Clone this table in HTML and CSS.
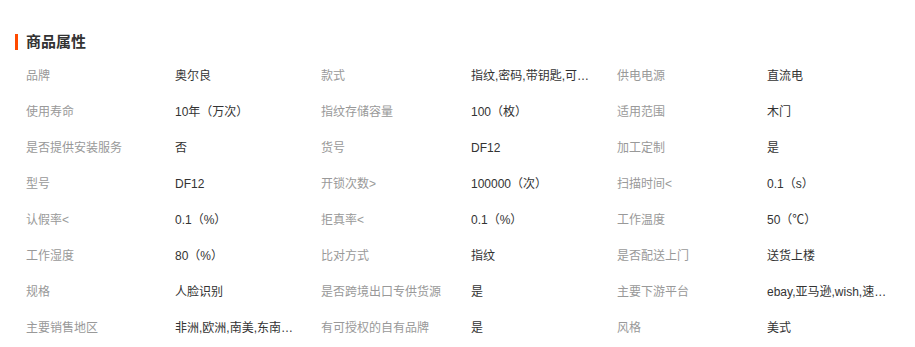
FILE: index.html
```html
<!DOCTYPE html>
<html lang="zh-CN">
<head>
<meta charset="utf-8">
<title>商品属性</title>
<link rel="stylesheet" href="styles.css">
</head>
<body>
<section class="attrs">
  <h2 class="attrs-title">商品属性</h2>
  <dl class="attrs-grid">
    <dt>品牌</dt><dd>奥尔良</dd>
    <dt>款式</dt><dd><span class="clip">指纹,密码,带钥匙,可远程开锁</span></dd>
    <dt>供电电源</dt><dd>直流电</dd>

    <dt>使用寿命</dt><dd>10年（万次）</dd>
    <dt>指纹存储容量</dt><dd>100（枚）</dd>
    <dt>适用范围</dt><dd>木门</dd>

    <dt>是否提供安装服务</dt><dd>否</dd>
    <dt>货号</dt><dd>DF12</dd>
    <dt>加工定制</dt><dd>是</dd>

    <dt>型号</dt><dd>DF12</dd>
    <dt>开锁次数&gt;</dt><dd>100000（次）</dd>
    <dt>扫描时间&lt;</dt><dd>0.1（s）</dd>

    <dt>认假率&lt;</dt><dd>0.1（%）</dd>
    <dt>拒真率&lt;</dt><dd>0.1（%）</dd>
    <dt>工作温度</dt><dd>50（℃）</dd>

    <dt>工作湿度</dt><dd>80（%）</dd>
    <dt>比对方式</dt><dd>指纹</dd>
    <dt>是否配送上门</dt><dd>送货上楼</dd>

    <dt>规格</dt><dd>人脸识别</dd>
    <dt>是否跨境出口专供货源</dt><dd>是</dd>
    <dt>主要下游平台</dt><dd><span class="clip">ebay,亚马逊,wish,速卖通,独立站</span></dd>

    <dt>主要销售地区</dt><dd><span class="clip">非洲,欧洲,南美,东南亚,北美</span></dd>
    <dt>有可授权的自有品牌</dt><dd>是</dd>
    <dt>风格</dt><dd>美式</dd>
  </dl>
</section>
</body>
</html>
```
FILE: styles.css
```css
html, body {
  margin: 0;
  padding: 0;
  background: #fff;
}

body {
  font-family: "Liberation Sans", "Noto Sans CJK SC", sans-serif;
  color: #333;
}

.attrs {
  padding: 34px 0 0 15px;
}

.attrs-title {
  margin: 0;
  font-size: 15px;
  line-height: 16px;
  font-weight: bold;
  color: #333;
  border-left: 3px solid #ff4a00;
  padding-left: 8px;
  height: 16px;
}

.attrs-grid {
  margin: 8px 0 0 11px;
  display: grid;
  grid-template-columns: 149px 146px 150px 146px 150px 146px;
  grid-auto-rows: 36px;
  font-size: 12px;
  line-height: 36px;
}

.attrs-grid dt,
.attrs-grid dd {
  margin: 0;
  white-space: nowrap;
}

.attrs-grid dt {
  color: #999;
}

.attrs-grid dd {
  color: #333;
}

.attrs-grid .clip {
  display: block;
  width: 120px;
  overflow: hidden;
  text-overflow: ellipsis;
}
```
